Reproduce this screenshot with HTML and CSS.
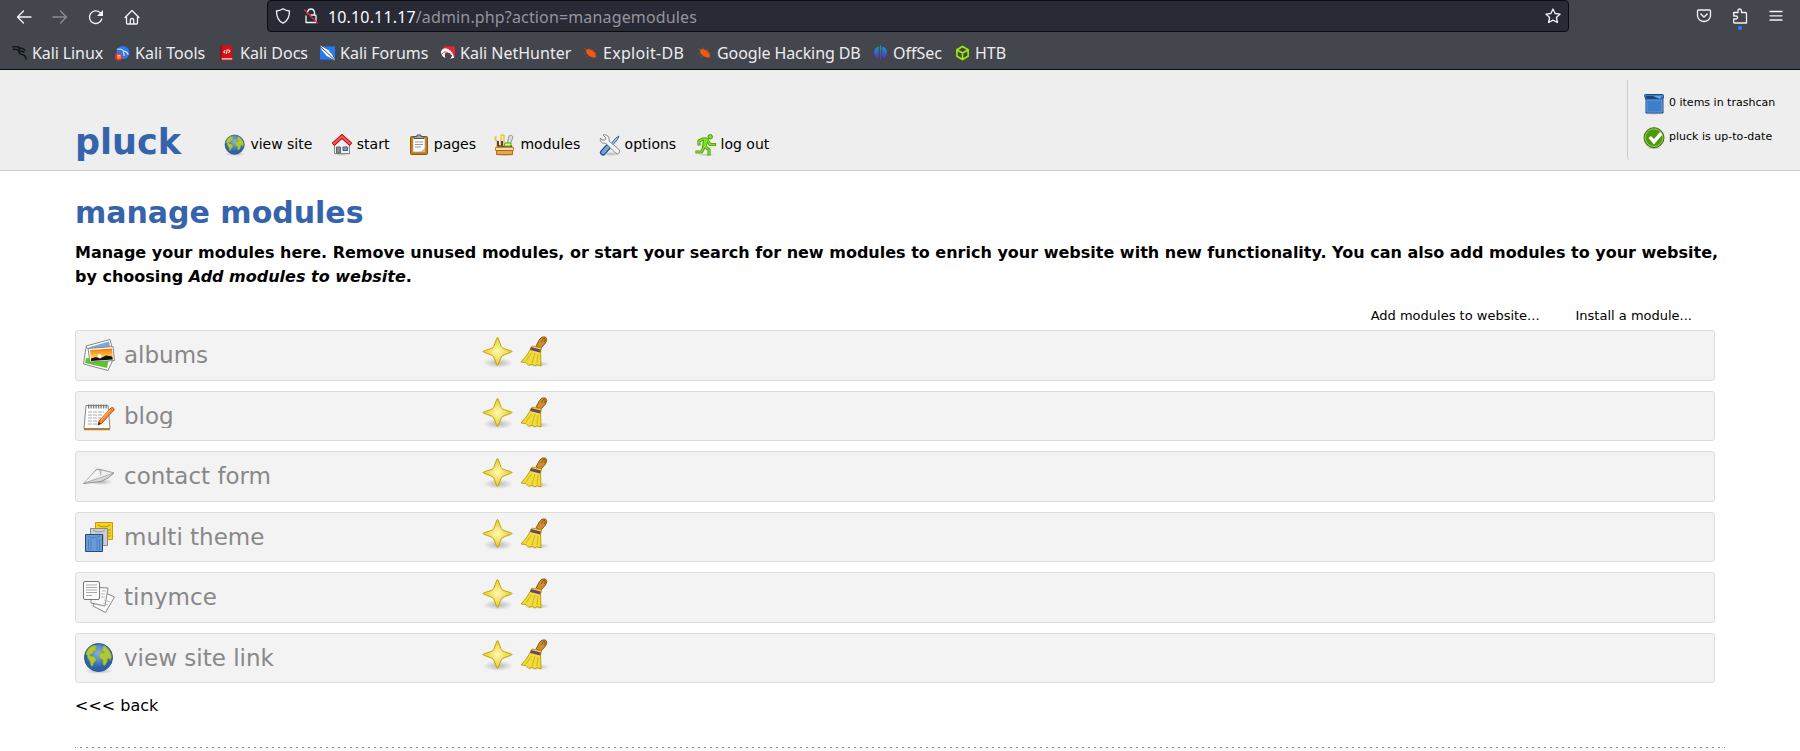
FILE: index.html
```
<!DOCTYPE html>
<html lang="en">
<head>
<meta charset="utf-8">
<title>pluck - manage modules</title>
<link rel="stylesheet" href="styles.css">
</head>
<body>
<svg class="defs" aria-hidden="true">
  <defs>
    <radialGradient id="gStar"><stop offset="0" stop-color="#fff9b4"/><stop offset="1" stop-color="#e3cc22"/></radialGradient>
    <radialGradient id="gSea" cy=".35"><stop offset="0" stop-color="#8ab2e0"/><stop offset="1" stop-color="#2d62a8"/></radialGradient>
    <radialGradient id="gShadow"><stop offset="0" stop-color="#000" stop-opacity=".25"/><stop offset="1" stop-color="#000" stop-opacity="0"/></radialGradient>
    <linearGradient id="gSun" x2="0" y2="1"><stop offset="0" stop-color="#f57900"/><stop offset="1" stop-color="#fdea66"/></linearGradient>
    <linearGradient id="gOff" x2="0" y2="1"><stop offset="0" stop-color="#10a5b5"/><stop offset="1" stop-color="#5a2ad0"/></linearGradient>
    <symbol id="globe" viewBox="0 0 32 32">
      <ellipse cx="16" cy="29" rx="15" ry="3" fill="url(#gShadow)"/>
      <circle cx="15.500" cy="15.500" r="14" fill="url(#gSea)" stroke="#28569a"/>
      <path d="M3.500 10 6 6l4-2.500 4 .5-1.500 2 1 2-3 1.500-1.500 2.500-2.500.5 1 1.500 3 .5 2.500 2-.5 2.500-2 2-1 3.500-1.500-1-1-4.500-2-2.500-.5-3-1.500-1.500zM20 4.500l2-.5 3.500 3.500L28 12l.5 3.500-1.500 3-1-2.500-1.500.5-.5 3.500-2.500 3.500-1.500-1v-4.500l-3-1.500-1-3.500 2-2.500 3.500.5-1-1.500-2 .5 1-2.500z" fill="#b0c92c" stroke="#84a02c" stroke-width=".5"/>
    </symbol>
    <symbol id="star" viewBox="0 0 32 32">
      <ellipse cx="16" cy="27" rx="15" ry="5" fill="url(#gShadow)"/>
      <path d="M15.500 1.500c1 0 3 8.500 4.500 10s10 3 10 4-8.500 3-10 4.500-3.500 9.500-4.500 9.500-3-8-4.500-9.500-10-3.500-10-4.500 8.500-2.500 10-4 3.500-10 4.500-10z" fill="url(#gStar)" stroke="#c4a000"/>
    </symbol>
    <symbol id="broom" viewBox="0 0 32 32">
      <ellipse cx="18" cy="28" rx="13" ry="3" fill="url(#gShadow)"/>
      <path d="m17 10 3.500-6.500q2-3.500 6-2.500 2.500 2 0 6L22 12z" fill="#cf8b38" stroke="#8f5902"/>
      <path d="m22.500 6 1.500-3q1-1.500 2 0t-1 3" fill="none" stroke="#8f5902"/>
      <path d="m13 10 9.500 2-1 4 .5 14-4-1.500-2 1.500-3-2-3 1.500-3-3-5-.5q6-6 9-12z" fill="#f0dc3c" stroke="#c4a000"/>
      <path d="M12.500 17 7 25M16 17l-3 10M19 18l-1 9" stroke="#d2b41a" fill="none"/>
      <path d="m11.500 12.500 10 2.500" stroke="#6b4475" stroke-width="3"/>
    </symbol>
    <symbol id="house" viewBox="0 0 22 22">
      <ellipse cx="11" cy="20" rx="10" ry="2" fill="url(#gShadow)"/>
      <path d="M3.500 10v9.500h15V10L11 3.500z" fill="#eee" stroke="#888"/>
      <path d="M5.500 13h4v6h-4z" fill="#888a85" stroke="#666"/>
      <path d="M12 13h4.500v3.500H12z" fill="#729fcf" stroke="#555b66"/>
      <path d="m2 10.500 9-8 9 8" fill="none" stroke="#b80000" stroke-width="4"/>
      <path d="m2.500 10 8.500-7.500 8.500 7.500" fill="none" stroke="#f65a5a" stroke-width="2.200"/>
    </symbol>
    <symbol id="clipboard" viewBox="0 0 22 22">
      <rect x="2.500" y="2.500" width="17" height="18" rx="1" fill="#c17d11" stroke="#8f5902"/>
      <path d="M5 4h12v14H5z" fill="#fff" stroke="#aaa" stroke-width=".7"/>
      <path d="M7 8h8M7 10.500h8M7 13h6" stroke="#999"/>
      <path d="m17 14-5 4h5z" fill="#bbb"/>
      <path d="M6 4.500V2.500h3V1h4v1.500h3v2z" fill="#a6a8a3" stroke="#555"/>
    </symbol>
    <symbol id="toolbox" viewBox="0 0 22 22">
      <ellipse cx="11" cy="21" rx="10" ry="1.500" fill="url(#gShadow)"/>
      <path d="M3 11h15l1 4H2z" fill="#7a5a30"/>
      <path d="M3 14V6H1V3h2M7 12V1h3v11" fill="#fbf0a0" stroke="#d6b51c"/>
      <path d="m13 10 2-8q3-2 4 1l-3 8z" fill="#ddd" stroke="#999"/>
      <path d="M3 7h2v5H3zM7 7h2v5H7z" fill="#5c3566"/>
      <path d="M11 9h6v3h-7z" fill="#d8f6b0" stroke="#4eaf06"/>
      <path d="M1.500 13.500h18v3h-18z" fill="#fbdba8" stroke="#c88020"/>
      <path d="M2.500 16.500h16v4h-16z" fill="#e9a54e" stroke="#b06a10"/>
    </symbol>
    <symbol id="tools" viewBox="0 0 22 22">
      <ellipse cx="12" cy="20" rx="9" ry="2" fill="url(#gShadow)"/>
      <path d="m9 13 8-9 3-2-1.500 3.500-8 9" fill="#a8c8ee" stroke="#3465a4"/>
      <path d="m4 18.500 4.500-5" stroke="#204a87" stroke-width="6" stroke-linecap="round"/>
      <path d="m4 18.500 4.500-5" stroke="#7aa4d4" stroke-width="3.500" stroke-linecap="round"/>
      <path d="M4 1 7 4 6 6 3 6 1.500 4c-1 4 2 6 5 5l10 10q2 2 3.500 0t0-3.500L10 7C11 3 8 0 4 1z" fill="#f4f4f4" stroke="#888a85"/>
    </symbol>
    <symbol id="runner" viewBox="0 0 22 22">
      <ellipse cx="11" cy="20.800" rx="9" ry="1.200" fill="url(#gShadow)"/>
      <g fill="none" stroke-linejoin="round" stroke-linecap="square">
        <path d="M4 10V7l4-2h4l-2.500 7.500 4.500 3V20M12.500 6.500l2.500 4h4.500M9.500 12.500 6.500 18H2" stroke="#4e9a06" stroke-width="3.200"/>
        <path d="M10.500 6.500 9.500 12" stroke="#4e9a06" stroke-width="4.800"/>
        <path d="M10.500 6.500 9.800 12" stroke="#7ee02a" stroke-width="3.200"/>
        <path d="M4 10V7l4-2h4l-2.500 7.500 4.500 3V20M12.500 6.500l2.500 4h4.500M9.500 12.500 6.500 18H2" stroke="#7ee02a" stroke-width="1.500"/>
      </g>
      <circle cx="15.300" cy="2.800" r="2.200" fill="#7ee02a" stroke="#4e9a06"/>
    </symbol>
    <symbol id="bin" viewBox="0 0 22 22">
      <ellipse cx="11" cy="20" rx="11" ry="2" fill="url(#gShadow)"/>
      <path d="M1.500 2.500q0-1 1-1h17q1 0 1 1l-.5 4v13.500h-17V7z" fill="#3f7fca" stroke="#204a87"/>
      <path d="M3 3h16l-1 3.500H3.500z" fill="#1d4680"/>
      <path d="M10 3h9l-2 3z" fill="#6ea2dd"/>
      <path d="M3.500 7h15M4 7v12h15V7" fill="none" stroke="#6fa2dc" stroke-width=".8"/>
    </symbol>
    <symbol id="ok" viewBox="0 0 22 22">
      <ellipse cx="11" cy="21" rx="8" ry="1.500" fill="url(#gShadow)"/>
      <circle cx="11" cy="10.700" r="10" fill="#4e9a06" stroke="#3a7604"/>
      <circle cx="11" cy="10.700" r="8.800" fill="none" stroke="#a5cf7c" stroke-width=".9"/>
      <path d="m5.500 11 2.500-2 3 3 6-7 2.500 2.500-8.500 10z" fill="#fff"/>
    </symbol>
    <symbol id="photos" viewBox="0 0 32 32">
      <path d="m3 7 24-6.500 3 12L8 22z" fill="#fff" stroke="#888"/>
      <path d="m5 8.500 21-6 2 10z" fill="#7aa8dc"/>
      <path d="M3 8.500.5 25 25 31.500l5-11z" fill="#fff" stroke="#888"/>
      <path d="m3 19-1 5 22 5 2-9z" fill="#5ec52a"/>
      <path d="m5 9.500 25-2 1.500 14L7 23z" fill="#fff" stroke="#888"/>
      <path d="m7 11 22-1.500 1 10.500-22 1z" fill="url(#gSun)"/>
      <circle cx="16.500" cy="17" r="2" fill="#fff"/>
      <path d="m8 19.500 5-1.500 4 1.500 6-3 6 1 1 3-22 1.500z" fill="#111"/>
    </symbol>
    <symbol id="notepad" viewBox="0 0 32 32">
      <path d="M3 5.500h22l2 23H1z" fill="#fdfdfd" stroke="#888"/>
      <path d="M1 29.500h26" stroke="#c17d11" stroke-width="1.500"/>
      <path d="M5 6.500h19" stroke="#777" stroke-width="4" stroke-dasharray="1.300 1.200"/>
      <path d="M5 12h16M5 15h15M5 18h13M5 21h11M5 24h10" stroke="#aaa" stroke-dasharray="4 1"/>
      <path d="M28 8q3-1.500 3 2L19 23l-4 2 1-4z" fill="#f5873a" stroke="#c35a10"/>
      <path d="m18 20 9-10" stroke="#fcc08c"/><path d="m15 25 1-3 2 2z" fill="#222"/>
    </symbol>
    <symbol id="plane" viewBox="0 0 32 32">
      <ellipse cx="18" cy="22" rx="12" ry="3" fill="url(#gShadow)"/>
      <path d="M.5 23.500 14 9l4 .8L31 13l-6 5-7 3.500z" fill="#d8d8d6" stroke="#888a85" stroke-width=".9"/>
      <path d="M.8 23.300 14.300 9.500l3.500 5.800z" fill="#f6f6f6"/>
      <path d="M.8 23.300 31 13l-13-3.200-.5 5.500" fill="#eee" stroke="#999" stroke-width=".7"/>
    </symbol>
    <symbol id="themes" viewBox="0 0 32 32">
      <path d="M12.500 1.500h17v17h-17z" fill="#f0d42a" stroke="#c4a000"/><path d="M15 4q6 4 12 0M24 9h4M24 12h4M24 15h4" stroke="#b99700" fill="none"/>
      <path d="M7.500 7.500h17v17h-17z" fill="#cfcfca" stroke="#888a85"/><path d="M10 9q6 4 12 0M20 13v10" stroke="#999" fill="none"/>
      <path d="M2.500 13.500h17v17h-17z" fill="#6b9bd2" stroke="#204a87"/><path d="M5 15q6 4 12 0M5.500 18v11M8 18v11M14 18v11M16.500 18v11" stroke="#4a7fbe" fill="none"/>
    </symbol>
    <symbol id="docs" viewBox="0 0 32 32">
      <path d="m18 10 13.500 6-9 15.500L10 25z" fill="#fafafa" stroke="#888"/>
      <path d="m8 6 17 1-3 18-14-3z" fill="#fafafa" stroke="#888"/>
      <path d="M19 10h4M18 13h4M18 16h4M21 19l6 2M20 22l5 2" stroke="#bbb"/>
      <rect x=".5" y=".5" width="16" height="18" rx="1.500" fill="#fcfcfc" stroke="#777"/>
      <path d="M3 4h11M3 6.500h11M3 9h11M3 11.500h11M3 14.500h6" stroke="#aaa"/>
    </symbol>
    <symbol id="bug" viewBox="0 0 16 16">
      <path d="m3 5 3-1.500 4 1.500 3 3 1 4-2.500 1-4.500-1.500L4 8.500z" fill="#f05a12"/>
      <path d="M1 3l4 2M7 2v3M12 4l-2 2M15 8h-3M4 13l2-3M1 9l3-1M13 14l-2-2" stroke="#b8481b" stroke-width=".8"/>
    </symbol>
  </defs>
</svg>

<div class="browser">
  <div class="toolbar">
    <div class="nav-buttons">
      <svg class="tb" viewBox="0 0 16 16"><path d="M15 8H1.500M7.500 2 1.500 8l6 6"/></svg>
      <svg class="tb dim" viewBox="0 0 16 16"><path d="M1 8h13.500M8.500 2l6 6-6 6"/></svg>
      <svg class="tb" viewBox="0 0 16 16"><path d="M13.800 10A6.300 6.300 0 1 1 12 3.500L14 5.500"/><path class="solid" d="M15 1v6H9z"/></svg>
      <svg class="tb" viewBox="0 0 16 16"><path d="M1 8.500 8 1.500l7 7M2.500 7.500V14q0 1 1 1h9q1 0 1-1V7.500M6.300 15v-4q0-1.500 1.700-1.500T9.700 11v4"/></svg>
    </div>
    <div class="urlbar">
      <svg class="tb" viewBox="0 0 16 16"><path d="M8 .8c2 1.500 4 2 6.500 2.200C14.500 8 13 13 8 15.200 3 13 1.500 8 1.500 3 4 2.800 6 2.300 8 .8z"/></svg>
      <svg class="tb lock" viewBox="0 0 16 16"><path d="M4.500 5.500V4.500Q5 1 8 1t3.500 3.500V7M3 8v6.500h10V8q0-1-1-1H8"/><path class="slash" d="m1.500 2 13 13"/></svg>
      <span class="url"><b>10.10.11.17</b>/admin.php?action=managemodules</span>
      <svg class="tb bookmark" viewBox="0 0 16 16"><path d="m8 1 2.100 4.500 5 .6-3.700 3.400 1 5L8 12.100l-4.400 2.400 1-5L.9 6.100l5-.6z"/></svg>
    </div>
    <div class="tool-buttons">
      <svg class="tb" viewBox="0 0 16 16"><path d="M2.500 2h11q1 0 1 1v4.500a6.500 6 0 0 1-13 0V3q0-1 1-1zM4.800 6 8 9l3.200-3"/></svg>
      <span class="ext"><svg class="tb" viewBox="0 0 16 16"><path d="M6 4.500V3q0-2 1.700-2t1.800 2v1.500h4q1 0 1 1v9.500H2.500q-.8 0-.8-.8V11H4q1.500-.2 1.500-1.600T4 8H1.700V4.500z"/></svg><i class="dot"></i></span>
      <svg class="tb" viewBox="0 0 16 16"><path d="M2 3.500h12M2 7.800h12M2 12h12"/></svg>
    </div>
  </div>
  <div class="bookmarks">
    <span class="bm linux"><svg viewBox="0 0 16 16"><path d="M0 1.500q6-1 8 1 4 0 6 3M1 4q4 0 6 1 0 4.500 5 5 3 1 3 5M7 6.500q4-1 6 1M9 3 6 5" fill="none" stroke="#111" stroke-width="1.500"/></svg>Kali Linux</span>
    <span class="bm tools"><svg viewBox="0 0 16 16"><circle cx="8.500" cy="7.500" r="7" fill="#267bf0"/><path d="M2 4q6-1 7 2 4 0 5 4M9 7l1 4" fill="none" stroke="#cfe4ff" stroke-width="1.300"/><circle cx="4" cy="12" r="4" fill="#f0342c"/><path d="M2.500 10.500h3.500M3.300 11v3M5.300 11v3" stroke="#fff" stroke-width=".8"/></svg>Kali Tools</span>
    <span class="bm docs"><svg viewBox="0 0 16 16"><path d="M1 0h12v16H1z" fill="#d90f16"/><path d="M1 13.500h12v1.500H2z" fill="#eee"/><path d="M1 0v16" stroke="#7c0a0e"/><path d="M5.500 5 4 7l1.500 1M9 4.500 10.500 6 9 8M7.800 4l-1 5" fill="none" stroke="#fff" stroke-width="1.100"/></svg>Kali Docs</span>
    <span class="bm forums"><svg viewBox="0 0 16 16"><path d="M0 1h16v14H0z" fill="#267bf0"/><path d="m0 0 9 5 4 5 3 6-9-5-5-6z" fill="#fff"/><path d="m0 1 8 7 7 7" stroke="#333" fill="none"/></svg>Kali Forums</span>
    <span class="bm hunter"><svg viewBox="0 0 16 16"><path d="M3 1h13v12z" fill="#f0232e"/><path d="M1 7q2-6 8-3 5 3 6 9l-4 1 2-3q-3-5-7-3-2 2 0 5-4 0-5-6z" fill="#fff"/><path d="M2 9q4-5 8 1" fill="none" stroke="#e3202c"/></svg>Kali NetHunter</span>
    <span class="bm exploit"><svg><use href="#bug"/></svg>Exploit-DB</span>
    <span class="bm google"><svg><use href="#bug"/></svg>Google Hacking DB</span>
    <span class="bm offsec"><svg viewBox="0 0 16 16"><path d="M6 1v13Q1 12 1 7.500T6 1zM10 1v13q5-2 5-6.500T10 1z" fill="url(#gOff)"/><path d="M7.300 0h1.400v16H7.300z" fill="url(#gOff)"/></svg>OffSec</span>
    <span class="bm htb"><svg viewBox="0 0 16 16"><path d="m8 1 6 3.500v7L8 15l-6-3.500v-7zM2.500 5 8 8l5.500-3M8 8v7" fill="none" stroke="#9fef00" stroke-width="1.700"/></svg>HTB</span>
  </div>
</div>

<header class="header">
  <div class="logo">pluck</div>
  <nav class="menu">
    <a><svg><use href="#globe"/></svg>view site</a>
    <a><svg><use href="#house"/></svg>start</a>
    <a><svg><use href="#clipboard"/></svg>pages</a>
    <a><svg><use href="#toolbox"/></svg>modules</a>
    <a><svg><use href="#tools"/></svg>options</a>
    <a><svg><use href="#runner"/></svg>log out</a>
  </nav>
  <div class="status">
    <div><svg><use href="#bin"/></svg><span>0 items in trashcan</span></div>
    <div><svg><use href="#ok"/></svg><span>pluck is up-to-date</span></div>
  </div>
</header>

<main class="content">
  <h1>manage modules</h1>
  <p class="intro">Manage your modules here. Remove unused modules, or start your search for new modules to enrich your website with new functionality. You can also add modules to your website, by choosing <em>Add modules to website</em>.</p>
  <div class="links"><a>Add modules to website...</a><a>Install a module...</a></div>
  <div class="modules">
    <div class="module"><svg class="icon"><use href="#photos"/></svg><span class="name">albums</span><svg class="act"><use href="#star"/></svg><svg class="act"><use href="#broom"/></svg></div>
    <div class="module"><svg class="icon"><use href="#notepad"/></svg><span class="name">blog</span><svg class="act"><use href="#star"/></svg><svg class="act"><use href="#broom"/></svg></div>
    <div class="module"><svg class="icon"><use href="#plane"/></svg><span class="name">contact form</span><svg class="act"><use href="#star"/></svg><svg class="act"><use href="#broom"/></svg></div>
    <div class="module"><svg class="icon"><use href="#themes"/></svg><span class="name">multi theme</span><svg class="act"><use href="#star"/></svg><svg class="act"><use href="#broom"/></svg></div>
    <div class="module"><svg class="icon"><use href="#docs"/></svg><span class="name">tinymce</span><svg class="act"><use href="#star"/></svg><svg class="act"><use href="#broom"/></svg></div>
    <div class="module"><svg class="icon"><use href="#globe"/></svg><span class="name">view site link</span><svg class="act"><use href="#star"/></svg><svg class="act"><use href="#broom"/></svg></div>
  </div>
  <a class="back">&lt;&lt;&lt; back</a>
  <div class="rule"></div>
</main>
</body>
</html>
```
FILE: styles.css
```
* { box-sizing: border-box; }
body { margin: 0; height: 751px; overflow: hidden; background: #fff; color: #000; font-family: "DejaVu Sans", sans-serif; font-size: 16px; }
svg { display: block; flex: none; }
.defs { position: absolute; width: 0; height: 0; }

.browser { height: 70px; background: #44464e; border-bottom: 1px solid #0c0c0f; font-family: "Noto Sans", sans-serif; color: #ececee; }
.toolbar { display: flex; height: 32px; }
.tb { width: 16px; height: 16px; fill: none; stroke: #f4f4f6; stroke-width: 1.3; stroke-linecap: round; stroke-linejoin: round; }
.tb .solid { fill: #f4f4f6; stroke: none; }
.dim { opacity: .4; }
.nav-buttons { display: flex; gap: 20px; width: 267px; padding: 9px 0 0 16px; }
.urlbar { display: flex; width: 1302px; height: 32px; padding: 0 7px; align-items: center; background: #282a36; border: 1px solid #0c0c0f; border-radius: 4px; }
.lock { margin-left: 12px; }
.lock .slash { stroke: #e22850; }
.url { margin-left: 9px; padding-top: 1px; font-size: 16px; line-height: 30px; letter-spacing: .15px; color: #94959b; white-space: nowrap; }
.url b { font-weight: 400; color: #fbfbfe; }
.bookmark { margin-left: auto; }
.tool-buttons { display: flex; gap: 20px; padding: 8px 0 0 127px; }
.ext { position: relative; }
.dot { position: absolute; left: 6px; top: 18px; width: 4px; height: 4px; border-radius: 2px; background: #2a7fff; }
.bookmarks { display: flex; padding: 9px 0 0 12px; }
.bm { display: flex; gap: 5px; align-items: center; font-size: 16px; line-height: 24px; white-space: nowrap; }
.bm svg { width: 15px; height: 16px; }
/* column widths of the bookmark entries */
.linux { width: 103px; letter-spacing: -.1px; }
.tools { width: 105px; }
.docs { width: 100px; }
.forums { width: 120px; }
.hunter { width: 143px; }
.exploit { width: 114px; letter-spacing: .3px; }
.google { width: 176px; letter-spacing: -.1px; }
.offsec { width: 82px; }

.header { display: flex; height: 101px; padding-left: 75px; background: #eee; border-bottom: 1px solid #ccc; }
.logo { width: 149px; padding-top: 51px; font-size: 35px; line-height: 42px; font-weight: 700; color: #3564ad; }
.menu { display: flex; gap: 18.4px; padding: 62px 0 0 .4px; font-size: 14px; line-height: 24px; }
.menu a { display: flex; gap: 4px; }
.menu svg { width: 22px; height: 22px; margin-top: 2px; }
.status { width: 173px; height: 80px; margin: 10px 0 0 auto; padding: 13px 0 0 15px; border-left: 1px solid #ccc; border-radius: 0 0 0 3px; font-size: 11px; line-height: 20px; }
.status div { display: flex; gap: 4px; height: 34px; }
.status svg { width: 22px; height: 22px; }

.content { padding: 0 75px; }
h1 { margin: 24px 0 0; font-size: 30px; line-height: 36px; color: #3564ad; }
.intro { margin: 10px 0 0; font-weight: 700; line-height: 24px; }
.links { display: flex; gap: 36px; justify-content: flex-end; padding-right: 33px; margin-top: 17px; font-size: 13px; line-height: 20px; }
.modules { display: flex; flex-direction: column; gap: 10px; width: 1640px; margin-top: 4px; }
.module { display: flex; height: 50.5px; padding: 5px 7px; background: #f3f3f3; border: 1px solid #ddd; border-radius: 3px; }
.icon { width: 32px; height: 32px; margin-top: 3px; }
.name { width: 358px; height: 31px; margin-left: 9px; overflow: hidden; font-size: 23px; line-height: 39px; color: #888; }
.act { width: 32px; height: 32px; }
.act + .act { margin-left: 5px; }
.back { display: block; margin-top: 13px; line-height: 20px; }
.rule { width: 1650px; height: 1px; margin-top: 31px; background: repeating-linear-gradient(90deg, #888 0 1px, #fff 1px 5px, #888 5px 6px); }
```
